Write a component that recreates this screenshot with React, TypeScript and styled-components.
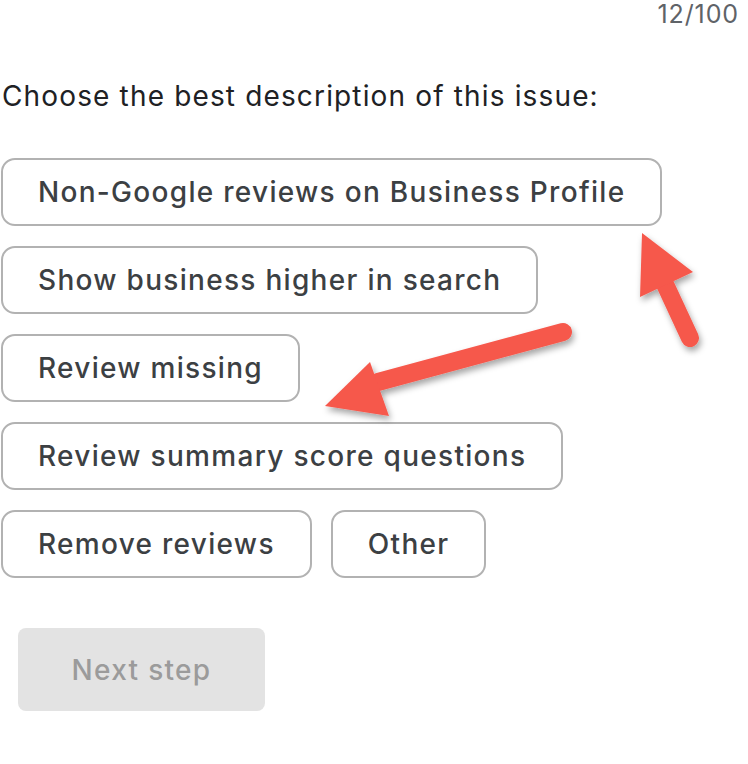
import React from 'react'
import styled, { createGlobalStyle } from 'styled-components'

const GlobalStyle = createGlobalStyle`
  html, body {
    margin: 0;
    padding: 0;
    background: #ffffff;
  }
  body {
    font-family: Inter, "Open Sans", "Liberation Sans", sans-serif;
  }
`

const Page = styled.div`
  position: relative;
  width: 748px;
  height: 764px;
  box-sizing: border-box;
  padding: 0 9px 0 1px;
  overflow: hidden;
`

const Counter = styled.div`
  display: flex;
  justify-content: flex-end;
  font-size: 25px;
  line-height: 28px;
  letter-spacing: 0.9px;
  color: #5f6368;
`

const Question = styled.h2`
  margin: 50px 0 0 1px;
  font-size: 28px;
  font-weight: 400;
  line-height: 36px;
  letter-spacing: 1.15px;
  color: #202124;
`

const ChipList = styled.div`
  display: flex;
  flex-direction: column;
  gap: 20px;
  margin-top: 44px;
`

const Row = styled.div`
  display: flex;
  gap: 19px;
`

const Chip = styled.button`
  box-sizing: border-box;
  height: 68px;
  padding: 0 35px;
  border: 2px solid #b2b2b2;
  border-radius: 14px;
  background: #ffffff;
  font-family: inherit;
  font-size: 28px;
  font-weight: 500;
  letter-spacing: 1.3px;
  color: #3c4043;
  white-space: nowrap;
  cursor: pointer;
`

const NextButton = styled.button`
  margin: 50px 0 0 17px;
  width: 247px;
  height: 83px;
  border: none;
  border-radius: 8px;
  background: #e3e3e3;
  font-family: inherit;
  font-size: 28px;
  font-weight: 500;
  letter-spacing: 1.3px;
  color: #9b9b9b;
`

const Overlay = styled.svg`
  position: absolute;
  left: 0;
  top: 0;
  pointer-events: none;
`

const Arrows = () => (
  <Overlay width="748" height="764" viewBox="0 0 748 764">
    <defs>
      <filter id="shadow" x="-20%" y="-20%" width="140%" height="140%">
        <feDropShadow dx="2" dy="4" stdDeviation="3" floodColor="#000" floodOpacity="0.35" />
      </filter>
    </defs>
    <g fill="#f6584c" stroke="#f6584c" filter="url(#shadow)">
      <line x1="664" y1="282" x2="690" y2="338" strokeWidth="18" strokeLinecap="round" />
      <polygon points="642,233 693,272 640,297" stroke="none" />
      <line x1="378" y1="382" x2="563" y2="332" strokeWidth="18" strokeLinecap="round" />
      <polygon points="325,406 370,362 389,416" stroke="none" />
    </g>
  </Overlay>
)

const App = () => (
  <>
    <GlobalStyle />
    <Page>
      <Counter>12/100</Counter>
      <Question>Choose the best description of this issue:</Question>
      <ChipList>
        <Row>
          <Chip>Non-Google reviews on Business Profile</Chip>
        </Row>
        <Row>
          <Chip>Show business higher in search</Chip>
        </Row>
        <Row>
          <Chip>Review missing</Chip>
        </Row>
        <Row>
          <Chip>Review summary score questions</Chip>
        </Row>
        <Row>
          <Chip>Remove reviews</Chip>
          <Chip>Other</Chip>
        </Row>
      </ChipList>
      <NextButton disabled>Next step</NextButton>
      <Arrows />
    </Page>
  </>
)

export default App
